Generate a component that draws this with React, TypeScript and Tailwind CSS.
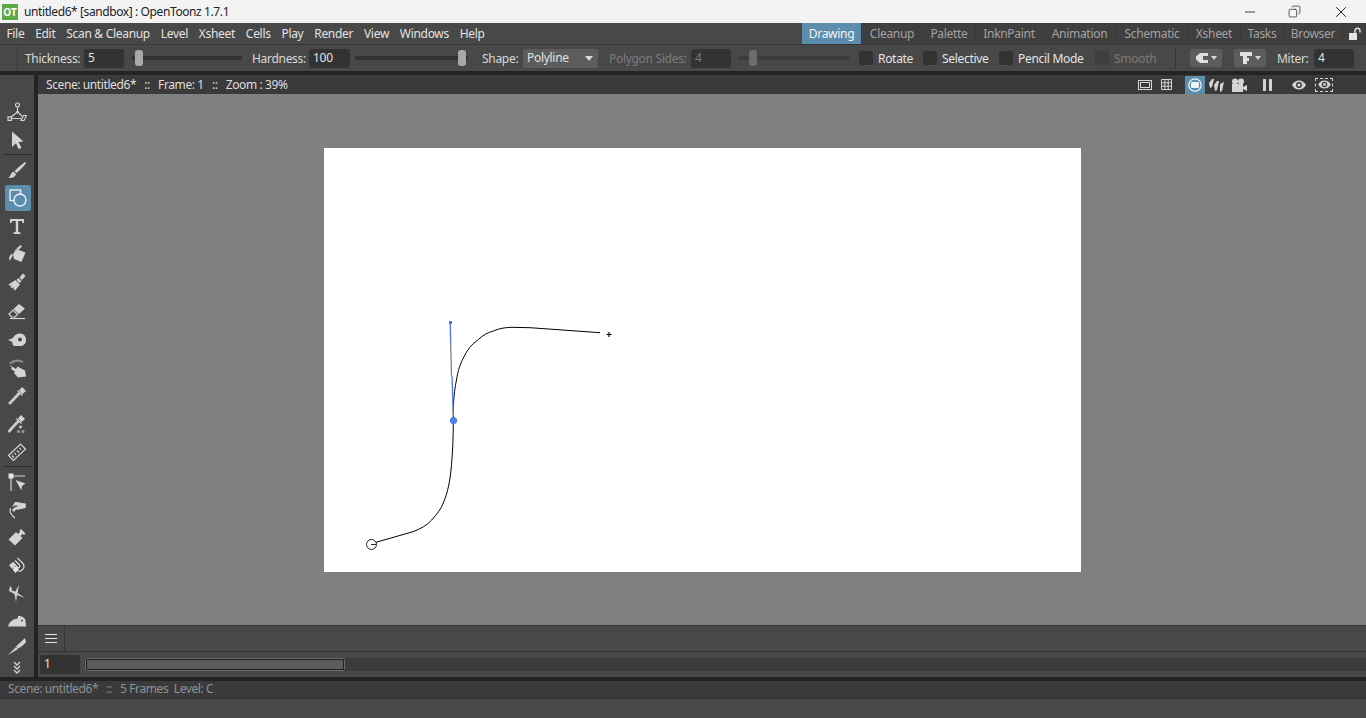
import React from "react";
import { Minus, X, Copy } from "lucide-react";

const font = "font-['Noto_Sans',sans-serif]";

function Ic({ children }: { children: React.ReactNode }) {
  return (
    <svg viewBox="0 0 20 20" className="w-5 h-5" fill="#d4d4d4" stroke="none">
      {children}
    </svg>
  );
}

const line = { fill: "none", stroke: "#d4d4d4", strokeWidth: 1.2 };

const tools: { h: string; icon: React.ReactNode; active?: boolean; sep?: boolean }[] = [
  {
    h: "h-[28px]",
    icon: (
      <Ic>
        <circle cx="10.5" cy="3" r="2" {...line} />
        <path d="M10.5 5 L10.5 10 M10.5 10 L3.5 15.5 M10.5 10 L15.5 14.5 M4.5 16.5 H14" {...line} />
        <circle cx="10.5" cy="10" r="1.3" />
        <rect x="1" y="15" width="3.4" height="3.4" {...line} />
        <path d="M14 18.5 L16.5 13.5 H19.5 L17 18.5 Z" {...line} />
      </Ic>
    ),
  },
  {
    h: "h-[28px]",
    sep: true,
    icon: (
      <Ic>
        <path d="M5 1.5 L16.5 11.5 L11.5 12 L14.5 18 L11.5 19 L9 13.2 L5 17 Z" />
      </Ic>
    ),
  },
  {
    h: "h-[28px]",
    icon: (
      <Ic>
        <path d="M18 2 L19 3.5 C15 8 12 11 9.5 13 L7.5 11 C10.5 8 14 5 18 2 Z" />
        <path d="M6.5 11.5 L9 14 C8.5 17 5 18.5 1.5 18 C3.5 16.5 3.5 13 6.5 11.5 Z" />
      </Ic>
    ),
  },
  {
    h: "h-[28px]",
    active: true,
    icon: (
      <Ic>
        <rect x="2" y="2" width="10.5" height="10.5" fill="none" stroke="#eef3f7" strokeWidth="1.3" />
        <circle cx="12" cy="12" r="6" fill="#5d8dac" stroke="#eef3f7" strokeWidth="1.3" />
      </Ic>
    ),
  },
  {
    h: "h-[28px]",
    icon: (
      <Ic>
        <path d="M3 3 H17 V7 H15.5 L15 5 H11.2 V16 L13.5 16.5 V18 H6.5 V16.5 L8.8 16 V5 H5 L4.5 7 H3 Z" />
      </Ic>
    ),
  },
  {
    h: "h-[28px]",
    icon: (
      <Ic>
        <path d="M9 5 L18.5 8.5 L14.5 18 L7 15 L6 10.5 Z" />
        <path d="M5.5 9.5 C2.5 11 1.5 14 2.5 16.5 C3.5 16 4.5 13.5 5.5 12 Z" />
        <path d="M9.5 4.5 L13.5 1 L15 2.5 L11.5 6 Z" />
      </Ic>
    ),
  },
  {
    h: "h-[28px]",
    icon: (
      <Ic>
        <path d="M16 1.5 L18.5 4 L15 8 L12.5 5.5 Z" />
        <path d="M11.5 6 L14.5 9 L12.5 11 L9.5 8 Z" />
        <path d="M8.5 8 L13 12.5 L8 18.5 L6.5 17 L7 15 L5 16.5 L3.5 15 L5 13 L3 14 L1.5 12.5 Z" />
      </Ic>
    ),
  },
  {
    h: "h-[28px] mt-[2px]",
    icon: (
      <Ic>
        <path d="M12 2 L18 6.5 L12 12 L6.5 7 Z" />
        <path d="M6 8 L10.5 12.5 L8 15 H4.5 L2 12 Z" {...line} />
        <path d="M3 16.5 H18" {...line} />
      </Ic>
    ),
  },
  {
    h: "h-[28px]",
    icon: (
      <Ic>
        <path d="M1 10 L6 8 C7 5 10 3.5 13 3.5 C17 3.5 19 6.5 19 10 C19 14 16 16 13 16 H8 C6 16 5 14 5.5 12 Z" />
        <circle cx="13" cy="9.5" r="2" fill="#484848" />
      </Ic>
    ),
  },
  {
    h: "h-[28px]",
    icon: (
      <Ic>
        <path d="M3 5.5 C7 2 12 2 16 4" fill="none" stroke="#8a8a8a" strokeWidth="2.2" />
        <path d="M2 6.5 L9 11 L10.5 8.5 L18 12.5 L19 18.5 L11 19.5 L7 15 L8 13.5 L4 11 L5 9.5 Z" />
      </Ic>
    ),
  },
  {
    h: "h-[28px]",
    icon: (
      <Ic>
        <path d="M15 1 L19 5 L15.5 8 L12 4.5 Z" />
        <path d="M10.5 4.5 L15.5 9.5 M13.5 7 L6 15 L3 18 L2 17 L5 14 L12 6.5" {...line} />
      </Ic>
    ),
  },
  {
    h: "h-[28px]",
    icon: (
      <Ic>
        <path d="M14 1 L18 5 L14.5 8 L11 4.5 Z" />
        <path d="M9.5 4.5 L14.5 9.5 M12.5 7 L5 15 L2.5 18 L1.5 17 L4 14 L11 6.5" {...line} />
        <circle cx="13.5" cy="13" r="1.4" />
        <circle cx="11.5" cy="17.5" r="1.5" fill="#9a9a9a" />
        <circle cx="16" cy="17.5" r="1.5" fill="#9a9a9a" />
      </Ic>
    ),
  },
  {
    h: "h-[28px]",
    sep: true,
    icon: (
      <Ic>
        <path d="M1.5 13.5 L13.5 2 L18.5 7 L6.5 18.5 Z" {...line} />
        <path d="M5 13.5 L7 15.5 M7.5 11 L9 12.5 M10 8.5 L12 10.5 M12.5 6 L14 7.5" {...line} />
      </Ic>
    ),
  },
  {
    h: "h-[28px]",
    icon: (
      <Ic>
        <rect x="1.5" y="1.5" width="5" height="5" fill="#e4e4e4" />
        <path d="M4 6 V19 M6 4 H18" {...line} />
        <path d="M8.5 8 L18.5 11.5 L15 14 L14.5 18.5 Z" />
      </Ic>
    ),
  },
  {
    h: "h-[27px]",
    icon: (
      <Ic>
        <path d="M8 2 C11 1.5 15 3 19 3.5 L18.5 8 C15 9 11 10 9 9.5 L7 12 L5 10 L7.5 7.5 L11 6 C9 5 7 6 5 7 Z" />
        <path d="M4 8 C2 11 3 14 8 18" {...line} />
      </Ic>
    ),
  },
  {
    h: "h-[28px]",
    icon: (
      <Ic>
        <path d="M14 2 L18.5 6.5 L17 8 L15.5 7 L13.5 9 L15.5 11 L8 18.5 L1.5 12.5 L9 5 L11 7 L13 5 L12.5 3.5 Z" />
      </Ic>
    ),
  },
  {
    h: "h-[28px]",
    icon: (
      <Ic>
        <path d="M10.5 3 L15.5 8 C19 12 15 18 10 15.5 L3.5 9" fill="none" stroke="#d4d4d4" strokeWidth="1.3" />
        <path d="M8 5.5 L12.5 10 C13.5 12 12 13 10.5 12.5 L6 7.5" fill="none" stroke="#d4d4d4" strokeWidth="1.3" />
        <path d="M2 10.5 L6 7 L9 10 L5.5 14 Z" />
        <path d="M5.5 14.5 L9 11 L12 14 L8.5 18 Z" fill="#e4e4e4" />
      </Ic>
    ),
  },
  {
    h: "h-[28px]",
    icon: (
      <Ic>
        <path d="M3 3 L8 9 L12 2 L10.5 10 L18 15 L10 12 L9 19 L7.5 11 L2 8 Z" />
        <circle cx="6" cy="6.5" r="1.4" fill="#484848" />
      </Ic>
    ),
  },
  {
    h: "h-[27px]",
    icon: (
      <Ic>
        <path d="M1 15.5 C2 11 6 8 11 7.5 L11 5 C14 4.5 17 6 18.5 9 L19 15.5 Z" />
        <circle cx="15" cy="9.5" r="1" fill="#484848" />
      </Ic>
    ),
  },
  {
    h: "h-[24px]",
    icon: (
      <Ic>
        <path d="M18 2 L19 6 C17 9 14 11 11 12.5 L9 10.5 Z" />
        <path d="M9 11 L11 13 L1 19 Z" />
      </Ic>
    ),
  },
  {
    h: "h-[17px]",
    icon: (
      <Ic>
        <path d="M7 5 L10 8 L13 5 M7 9 L10 12 L13 9 M7 13 L10 16 L13 13" fill="none" stroke="#d4d4d4" strokeWidth="1.3" />
      </Ic>
    ),
  },
];

function Toolbar() {
  return (
    <div className="w-[34px] shrink-0 bg-[#484848] pt-[23px] flex flex-col">
      {tools.map((t, i) => (
        <React.Fragment key={i}>
          <div className={`${t.h} flex items-center justify-center`}>
            {t.active ? (
              <div className="w-[26px] h-[26px] ml-[1px] rounded-[2px] bg-[#5d8dac] flex items-center justify-center">
                {t.icon}
              </div>
            ) : (
              t.icon
            )}
          </div>
          {t.sep && <div className="h-px mx-[3px] mb-px bg-[#2c2c2c]" />}
        </React.Fragment>
      ))}
    </div>
  );
}

function Input({ value, w = "w-[40px]", dim }: { value: string; w?: string; dim?: boolean }) {
  return (
    <div
      className={`${w} h-[19px] shrink-0 rounded-[3px] bg-[#333333] pl-[4px] text-[12px] leading-[18px] ${dim ? "bg-[#3e3e3e] text-[#7a7a7a]" : "text-[#e2e2e2]"}`}
    >
      {value}
    </div>
  );
}

function Slider({ w, left, dim }: { w: string; left: string; dim?: boolean }) {
  return (
    <div className={`${w} h-[16px] shrink-0 relative flex items-center`}>
      <div className={`w-full h-[4px] ${dim ? "bg-[#3c3c3c]" : "bg-[#333333]"}`} />
      <div className={`absolute ${left} top-0 w-[8px] h-[16px] rounded-[3px] ${dim ? "bg-[#6c6c6c]" : "bg-[#a8a8a8]"}`} />
    </div>
  );
}

function Check({ label, w, ml, dim }: { label: string; w: string; ml: string; dim?: boolean }) {
  return (
    <>
      <div className={`${ml} w-[14px] h-[14px] shrink-0 rounded-[2px] ${dim ? "bg-[#3e3e3e]" : "bg-[#333333]"}`} />
      <span className={`${w} ml-[5px] pt-[2px] shrink-0 ${dim ? "text-[#7a7a7a]" : "text-[#e4e4e4]"}`}>{label}</span>
    </>
  );
}

function OptionsBar() {
  return (
    <div className="h-[26px] bg-[#484848] flex items-center text-[12px] tracking-[-0.3px] whitespace-nowrap">
      <div className="w-[18px] h-full shrink-0 border-r border-[#3a3a3a]" />
      <span className="ml-[7px] w-[59px] pt-[2px] shrink-0 text-[#d8d8d8]">Thickness:</span>
      <Input value="5" />
      <Slider w="w-[110px] ml-[8px]" left="left-[3px]" />
      <span className="ml-[10px] w-[57px] pt-[2px] shrink-0 text-[#d8d8d8]">Hardness:</span>
      <Input value="100" w="w-[41px]" />
      <Slider w="w-[113px] ml-[5px]" left="left-[103px]" />
      <span className="ml-[14px] w-[41px] pt-[2px] shrink-0 text-[#d8d8d8]">Shape:</span>
      <div className="w-[75px] h-[19px] shrink-0 rounded-[2px] bg-[#5c5c5c] pl-[4px] pr-[5px] flex items-center justify-between text-[#e2e2e2]">
        <span>Polyline</span>
        <svg viewBox="0 0 8 5" className="w-2 h-[5px]">
          <path d="M0 0 H8 L4 5 Z" fill="#d8d8d8" />
        </svg>
      </div>
      <span className="ml-[11px] w-[82px] pt-[2px] shrink-0 text-[#7c7c7c]">Polygon Sides:</span>
      <Input value="4" dim />
      <Slider w="w-[110px] ml-[8px]" left="left-[10px]" dim />
      <Check label="Rotate" w="w-[40px]" ml="ml-[10px]" />
      <Check label="Selective" w="w-[52px]" ml="ml-[5px]" />
      <Check label="Pencil Mode" w="w-[76px]" ml="ml-[5px]" />
      <Check label="Smooth" w="w-[61px]" ml="ml-[1px]" dim />
      <div className="w-px h-[22px] shrink-0 bg-[#333333]" />
      <div className="ml-[14px] w-[32px] h-[18px] shrink-0 rounded-[2px] bg-[#5c5c5c] flex items-center justify-center gap-[3px]">
        <svg viewBox="0 0 12 10" className="w-3 h-[10px]">
          <path d="M4 0 H12 V3 H7 V7 H12 V10 H4 L0 6.5 V3.5 Z" fill="#e0e0e0" />
        </svg>
        <svg viewBox="0 0 6 4" className="w-[6px] h-1">
          <path d="M0 0 H6 L3 4 Z" fill="#d8d8d8" />
        </svg>
      </div>
      <div className="ml-[12px] w-[32px] h-[18px] shrink-0 rounded-[2px] bg-[#5c5c5c] flex items-center justify-center gap-[3px]">
        <svg viewBox="0 0 12 12" className="w-3 h-3">
          <path d="M0 0 H12 V4 H7 V6 H9 V9 H7 V12 H3 V4 H0 Z" fill="#e0e0e0" />
        </svg>
        <svg viewBox="0 0 6 4" className="w-[6px] h-1">
          <path d="M0 0 H6 L3 4 Z" fill="#d8d8d8" />
        </svg>
      </div>
      <span className="ml-[11px] w-[37px] pt-[2px] shrink-0 text-[#d8d8d8]">Miter:</span>
      <Input value="4" />
    </div>
  );
}

const menus = ["File", "Edit", "Scan & Cleanup", "Level", "Xsheet", "Cells", "Play", "Render", "View", "Windows", "Help"];

const rooms = [
  { name: "Drawing", w: "w-[60px]", active: true },
  { name: "Cleanup", w: "w-[61px]" },
  { name: "Palette", w: "w-[53px]" },
  { name: "InknPaint", w: "w-[67px]" },
  { name: "Animation", w: "w-[74px]" },
  { name: "Schematic", w: "w-[71px]" },
  { name: "Xsheet", w: "w-[53px]" },
  { name: "Tasks", w: "w-[43px]" },
  { name: "Browser", w: "w-[59px]" },
];

function MenuBar() {
  return (
    <div className="h-[22px] bg-[#484848] border-b border-[#383838] flex justify-between text-[12px] tracking-[-0.3px] whitespace-nowrap">
      <div className="flex items-center pl-[1px] pt-px">
        {menus.map((m) => (
          <span key={m} className="px-[5.4px] text-[#e2e2e2]">
            {m}
          </span>
        ))}
      </div>
      <div className="flex">
        {rooms.map((r) => (
          <div
            key={r.name}
            className={`${r.w} pt-px flex items-center justify-center border-r border-[#383838] ${r.active ? "bg-[#5d8dac] text-[#f4f4f4]" : "bg-[#3f3f3f] text-[#a2a2a2]"}`}
          >
            {r.name}
          </div>
        ))}
        <div className="w-[23px] bg-[#3f3f3f] flex items-center justify-center">
          <svg viewBox="0 0 14 14" className="w-[14px] h-[14px]">
            <rect x="1" y="6" width="8" height="7" fill="#e4e4e4" />
            <path d="M7 6 V3.5 C7 0.5 12 0.5 12 3.5 V5.5" fill="none" stroke="#e4e4e4" strokeWidth="1.4" />
          </svg>
        </div>
      </div>
    </div>
  );
}

function ViewerTitle() {
  return (
    <div className="h-[19px] bg-[#3a3a3a] flex items-center justify-between text-[12px] whitespace-pre">
      <span className="ml-[8px] tracking-[-0.4px] text-[#dedede]">Scene: untitled6*   ::   Frame: 1   ::   Zoom : 39%</span>
      <div className="flex items-center h-full pr-[33px]">
        <svg viewBox="0 0 14 10" className="w-[14px] h-[10px]" fill="none" stroke="#d4d4d4">
          <rect x="0.5" y="0.5" width="13" height="9" />
          <rect x="2.5" y="2.5" width="9" height="5" />
        </svg>
        <svg viewBox="0 0 11 11" className="ml-[9px] w-[11px] h-[11px]" fill="none" stroke="#d4d4d4">
          <path d="M0.5 0.5 H10.5 V10.5 H0.5 Z M3.8 0.5 V10.5 M7.2 0.5 V10.5 M0.5 3.8 H10.5 M0.5 7.2 H10.5" />
        </svg>
        <div className="ml-[13px] w-[20px] h-[18px] bg-[#5d8dac] flex items-center justify-center">
          <svg viewBox="0 0 14 14" className="w-[14px] h-[14px]">
            <circle cx="7" cy="7" r="6.2" fill="none" stroke="#eef3f7" strokeWidth="1.3" />
            <rect x="3" y="4" width="8" height="6" rx="1" fill="#eef3f7" />
          </svg>
        </div>
        <svg viewBox="0 0 16 14" className="ml-[4px] w-[16px] h-[14px]" fill="#d4d4d4">
          <path d="M0 5 L3 1 L5 1 L3 9 L1 10 Z M5 7 L8 3 L10 3 L8 12 L6 13 Z M11 6 L15 4 L13 13 L11 14 Z" />
        </svg>
        <svg viewBox="0 0 16 14" className="ml-[6px] w-[16px] h-[14px]" fill="#d4d4d4">
          <circle cx="4" cy="3.5" r="3" />
          <circle cx="10" cy="3.5" r="3" />
          <rect x="1" y="6" width="11" height="8" />
          <path d="M12 9 L16 7 V13 L12 11 Z" />
        </svg>
        <svg viewBox="0 0 9 12" className="ml-[16px] w-[9px] h-[12px]" fill="#d4d4d4">
          <rect x="0" y="0" width="3" height="12" rx="0.5" />
          <rect x="6" y="0" width="3" height="12" rx="0.5" />
        </svg>
        <svg viewBox="0 0 14 10" className="ml-[20px] w-[14px] h-[10px]">
          <path d="M0 5 C3 -1 11 -1 14 5 C11 11 3 11 0 5 Z" fill="#d4d4d4" />
          <circle cx="7" cy="5" r="3" fill="#3a3a3a" />
          <circle cx="7" cy="5" r="1.6" fill="#d4d4d4" />
        </svg>
        <div className="ml-[9px] w-[18px] h-[14px] border border-dashed border-[#d4d4d4] flex items-center justify-center">
          <svg viewBox="0 0 14 10" className="w-[13px] h-[9px]">
            <path d="M0 5 C3 -1 11 -1 14 5 C11 11 3 11 0 5 Z" fill="#d4d4d4" />
            <circle cx="7" cy="5" r="3" fill="#3a3a3a" />
            <circle cx="7" cy="5" r="1.6" fill="#d4d4d4" />
          </svg>
        </div>
      </div>
    </div>
  );
}

function Canvas() {
  return (
    <div className="flex-1 bg-[#808080] flex items-center justify-center">
      <div className="w-[757px] h-[424px] bg-white">
        {/* coordinates are page px minus the canvas origin (324,148) */}
        <svg viewBox="324 148 757 424" className="w-full h-full">
          <path
            d="M376 542.3 L413 531.7 C421 528.5 427 525.5 431.7 520 C437 514 441 509 443.3 503 C448 492 450 480 451 470 C452.5 455 453.3 440 453.3 420 L453.3 407 C454 395 455 387 456.5 380 C458 370 460 365 463.3 358 C467 350 472 344 478.3 339.5 C483 335 488 332.5 493.3 331 C499 328.5 505 327.5 511 327.3 L530 327.7 L600 332.7"
            fill="none"
            stroke="#000"
            strokeWidth="1"
          />
          <circle cx="371.5" cy="544.5" r="5" fill="none" stroke="#111" strokeWidth="0.9" />
          <path d="M371 544.5 H376" stroke="#111" strokeWidth="0.9" />
          <path d="M450.2 322 L450.7 343" stroke="#4a78e8" strokeWidth="1.3" />
          <path d="M450.7 343 L451.5 376" stroke="#808080" strokeWidth="1.3" />
          <path d="M452 376 L453 407" stroke="#4a78e8" strokeWidth="1.3" />
          <path d="M453 407 L453.3 416" stroke="#808080" strokeWidth="1.3" />
          <rect x="449" y="321" width="3" height="3" fill="#4a6fd8" />
          <circle cx="453.5" cy="420.5" r="3.6" fill="#4f7df0" />
          <path d="M606.5 334.5 H611.5 M609 332 V337" stroke="#000" strokeWidth="1.1" />
        </svg>
      </div>
    </div>
  );
}

function BottomBars() {
  return (
    <div className="bg-[#484848] text-[12px]">
      <div className="h-[27px] border-t border-b border-[#333333] flex">
        <div className="w-[27px] border-r border-[#383838] flex items-center justify-center">
          <div className="w-[12px] flex flex-col gap-[3px]">
            <div className="h-px bg-[#e4e4e4]" />
            <div className="h-px bg-[#e4e4e4]" />
            <div className="h-px bg-[#e4e4e4]" />
          </div>
        </div>
      </div>
      <div className="h-[25px] flex items-center pl-[2px]">
        <Input value="1" />
        <div className="ml-[5px] flex-1 h-[13px] bg-[#3c3c3c]">
          <div className="w-[260px] h-[13px] rounded-[2px] border-2 border-[#222222] bg-[#5c5c5c] outline outline-1 outline-[#6a6a6a] -outline-offset-1" />
        </div>
      </div>
    </div>
  );
}

export default function App() {
  return (
    <div className={`w-[1366px] h-[718px] overflow-hidden flex flex-col bg-[#484848] ${font}`}>
      <div className="h-[23px] shrink-0 bg-[#f3f3f3] flex items-center justify-between">
        <div className="flex items-center">
          <div className="ml-[2px] w-[16px] h-[16px] bg-[#5fa84a] flex items-center justify-center text-[10px] font-bold leading-none text-white">
            OT
          </div>
          <span className="ml-[6px] pt-px text-[12px] tracking-[-0.4px] text-[#222222] whitespace-nowrap">
            untitled6* [sandbox] : OpenToonz 1.7.1
          </span>
        </div>
        <div className="flex items-center text-[#111111]">
          <Minus size={16} strokeWidth={1.2} className="mr-[30px]" />
          <Copy size={13} strokeWidth={1.2} className="mr-[31px] -scale-x-100" />
          <X size={18} strokeWidth={1.2} className="mr-[16px]" />
        </div>
      </div>
      <MenuBar />
      <OptionsBar />
      <div className="h-[4px] shrink-0 bg-[#232323]" />
      <div className="flex-1 min-h-0 flex">
        <Toolbar />
        <div className="w-[4px] shrink-0 bg-[#232323]" />
        <div className="flex-1 min-w-0 flex flex-col">
          <ViewerTitle />
          <Canvas />
          <BottomBars />
        </div>
      </div>
      <div className="h-[4px] shrink-0 bg-[#232323]" />
      <div className="h-[18px] shrink-0 bg-[#3a3a3a] border-b border-[#2e2e2e] pl-[8px] text-[12px] tracking-[-0.4px] leading-[16px] whitespace-pre text-[#8a9499]">
        Scene: untitled6*   ::   5 Frames  Level: C
      </div>
      <div className="h-[19px] shrink-0 bg-[#484848]" />
    </div>
  );
}
